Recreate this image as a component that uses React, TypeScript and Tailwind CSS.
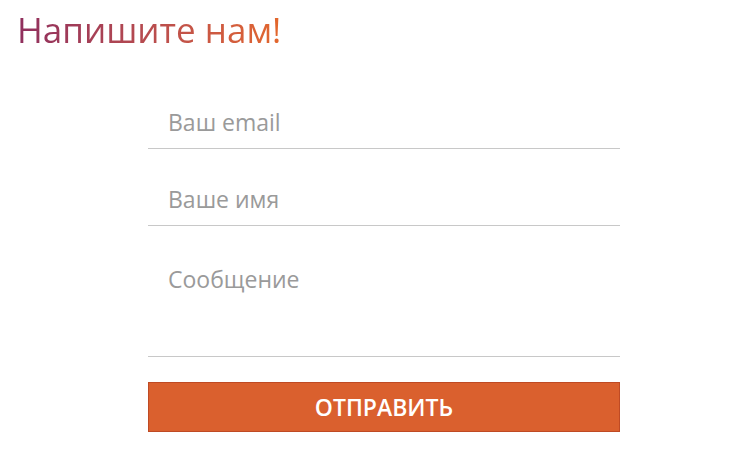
export default function App() {
  return (
    <div className="w-[730px] h-[465px] bg-white font-['Open_Sans',sans-serif] overflow-hidden">
      <h1 className="pl-[17px] pt-[8px] text-[35px] leading-[44px] inline-block bg-gradient-to-r from-[#8a2a5e] to-[#e3672b] bg-clip-text text-transparent">
        Напишите нам!
      </h1>

      <form className="ml-[148px] w-[472px] mt-[43px] flex flex-col">
        <input
          type="text"
          placeholder="Ваш email"
          className="h-[54px] px-[20px] text-[23px] text-[#555] placeholder-[#9a9a9a] border-b border-[#c8c8c8] outline-none"
        />
        <input
          type="text"
          placeholder="Ваше имя"
          className="mt-[23px] h-[54px] px-[20px] text-[23px] text-[#555] placeholder-[#9a9a9a] border-b border-[#c8c8c8] outline-none"
        />
        <textarea
          placeholder="Сообщение"
          className="mt-[23px] h-[108px] px-[20px] pt-[15px] text-[23px] leading-[30px] text-[#555] placeholder-[#9a9a9a] border-b border-[#c8c8c8] outline-none resize-none"
        />
        <button
          type="button"
          className="mt-[25px] h-[50px] bg-[#da602e] border border-[#bf4a24] text-white text-[23px] font-semibold"
        >
          ОТПРАВИТЬ
        </button>
      </form>
    </div>
  );
}
